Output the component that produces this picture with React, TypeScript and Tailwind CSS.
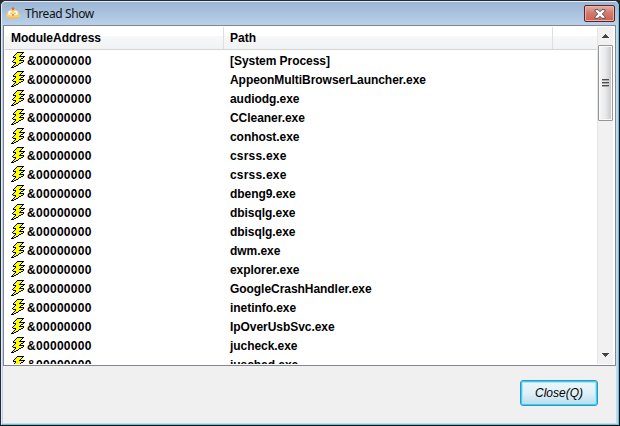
const rows = [
  "[System Process]",
  "AppeonMultiBrowserLauncher.exe",
  "audiodg.exe",
  "CCleaner.exe",
  "conhost.exe",
  "csrss.exe",
  "csrss.exe",
  "dbeng9.exe",
  "dbisqlg.exe",
  "dbisqlg.exe",
  "dwm.exe",
  "explorer.exe",
  "GoogleCrashHandler.exe",
  "inetinfo.exe",
  "IpOverUsbSvc.exe",
  "jucheck.exe",
  "jusched.exe",
];

// Pixel rows of the bolt: "#" is the outline, "y" the yellow fill.
const boltPixels = [
  "......#######..",
  ".....#yyyyy#...",
  "....#yyyyy#....",
  "...#yyyyy#.....",
  "..#yyyyy######.",
  "..###yyyyyyy#..",
  "....#yyyyy##...",
  "...#yyyyy#.....",
  "..#yyyyy#####..",
  ".#yyyyyyyyyy#..",
  "..###yyyyy##...",
  "....#yyy##.....",
  "...#yyy#.......",
  "..#yy##........",
  ".#y##..........",
  "###............",
];

function Bolt() {
  return (
    <svg width="15" height="16" viewBox="0 0 15 16" shapeRendering="crispEdges" className="shrink-0">
      {boltPixels.flatMap((line, y) =>
        line.split("").map((c, x) =>
          c === "." ? null : (
            <rect key={`${x}-${y}`} x={x} y={y} width="1" height="1" fill={c === "#" ? "#000" : "#ffff00"} />
          ),
        ),
      )}
    </svg>
  );
}

function Chick() {
  return (
    <svg width="14" height="12" viewBox="0 0 14 12" className="shrink-0">
      <path d="M0.3 9C.3 6 3 2 7 2s6.7 4 6.7 7c0 1.8-2.5 2.500-6.700 2.500S.3 10.800.3 9z" fill="#fbd060" />
      <path d="M1 9.500c2 1.300 10 1.300 12 0-.5 1.500-3 2-6 2s-5.500-.5-6-2z" fill="#f5b04a" />
      <path d="M5.300 1.200h3.400L7 3.500z" fill="#e05b4e" />
      <path d="M6.500 0h1v3h-1z" fill="#d65b59" />
      <circle cx="4.300" cy="6" r="2.200" fill="#fffaf0" />
      <circle cx="9.700" cy="6" r="2.200" fill="#fffaf0" />
      <path d="M4.500 5.500h1V7h-1zM8.500 5.500h1V7h-1z" fill="#a38f7c" />
      <path d="M6 7h2v1.500H6z" fill="#ed8250" />
    </svg>
  );
}

function ScrollBar() {
  return (
    <div className="flex w-[16px] shrink-0 flex-col items-center border-l border-[#e6e6e6] bg-[#f1f1f1]">
      <div className="flex h-[18px] shrink-0 items-center">
        <svg width="7" height="4" shapeRendering="crispEdges">
          <path d="M3 0h1v1h1v1h1v1h1v1H0V3h1V2h1V1h1z" fill="#444" />
        </svg>
      </div>
      <div className="flex h-[76px] w-[15px] shrink-0 flex-col items-center justify-center gap-px rounded-[1px] border border-[#969696] bg-linear-to-r from-[#f7f7f7] via-[#e8e9ea] to-[#c4c5c8] shadow-[inset_0_0_0_1px_#fafafa]">
        {[0, 1, 2].map((n) => (
          <div key={n} className="h-[2px] w-[7px] border-t border-[#4c4c4c] bg-[#aaa]" />
        ))}
      </div>
      <div className="flex-1" />
      <div className="flex h-[18px] items-center">
        <svg width="7" height="4" shapeRendering="crispEdges">
          <path d="M0 0h7v1H6v1H5v1H4v1H3V3H2V2H1V1H0z" fill="#444" />
        </svg>
      </div>
    </div>
  );
}

export default function App() {
  return (
    <div className="h-[426px] w-[620px] overflow-hidden bg-[#292929] font-['Liberation_Sans',Arial,sans-serif] text-[12px] text-black">
      <div className="flex h-[426px] w-[620px] flex-col rounded-t-[6px] border border-[#252a30] border-r-black border-b-black bg-[#b9d1ea]">
        <div className="flex h-[424px] flex-col rounded-t-[5px] border border-t-[#e4edf5] border-r-[#36d6f2] border-b-[#36d6f2] border-l-[#e2eef9]">
          <header className="flex h-[23px] shrink-0 items-start rounded-t-[4px] bg-linear-to-b from-[#9bb5d3] to-[#b9d1ea] pr-[3px] pl-[4px]">
            <div className="pt-[5px]"><Chick /></div>
            <h1 className="ml-[5px] pt-[4px] font-['Noto_Sans','Open_Sans',sans-serif] text-[12px] leading-[15px] tracking-[-0.4px] text-[#111]">Thread Show</h1>
            <button aria-label="Close" className="mt-[3px] ml-auto flex h-[17px] w-[31px] items-center justify-center rounded-[2px] border border-[#56242a] bg-linear-to-b from-[#e8aea4] from-0% via-[#d27a6d] via-45% to-[#d2604c] shadow-[inset_0_0_0_1px_#e9b3aa]">
              <svg width="12" height="10" viewBox="0 0 12 10">
                <path d="M1 .7h3l2 2 2-2h3v1.500L8.300 5 11 7.800v1.500H8l-2-2-2 2H1V7.800L3.700 5 1 2.200z" fill="#fff" stroke="#535566" />
              </svg>
            </button>
          </header>
          <main className="mr-px ml-px flex min-h-0 flex-1 flex-col border-r border-b border-[#c5dced] bg-[#f0f0f0]">
            <section className="flex h-[341px] w-[613px] shrink-0 overflow-hidden border border-[#828790] bg-white py-px pr-[2px] pl-px">
              <div className="min-w-0 flex-1 overflow-hidden">
                <div className="flex h-[23px] border-b border-[#d5d5d5] bg-linear-to-b from-white from-40% via-[#f7f8fa] via-40% to-[#f1f2f4] font-bold leading-[23px]">
                  <div className="w-[219px] border-r border-[#dedfe1] pl-[6px]">ModuleAddress</div>
                  <div className="w-[329px] border-r border-[#dedfe1] pl-[6px]">Path</div>
                </div>
                <div className="pt-[2px]">
                  {rows.map((path, i) => (
                    <div key={i} className="flex h-[19px] items-start pl-[6px] font-bold leading-[19px]">
                      <Bolt />
                      <span className="ml-px w-[203px] tracking-[0.3px]">&amp;00000000</span>
                      <span className={path === "csrss.exe" ? "tracking-[0.2px]" : "tracking-[-0.05px]"}>{path}</span>
                    </div>
                  ))}
                </div>
              </div>
              <ScrollBar />
            </section>
            <div className="flex justify-end pt-[14px] pr-[18px]">
              <button className="h-[26px] w-[78px] rounded-[3px] border border-[#3c8fbf] bg-linear-to-b from-[#eef6fb] from-0% via-[#e0f0f8] via-50% to-[#b9dcec] pt-px text-[12px] italic leading-[23px] shadow-[inset_0_0_0_1px_#32d2f5,inset_0_0_0_2px_#a5e6f7]">Close(Q)</button>
            </div>
          </main>
        </div>
      </div>
    </div>
  );
}
